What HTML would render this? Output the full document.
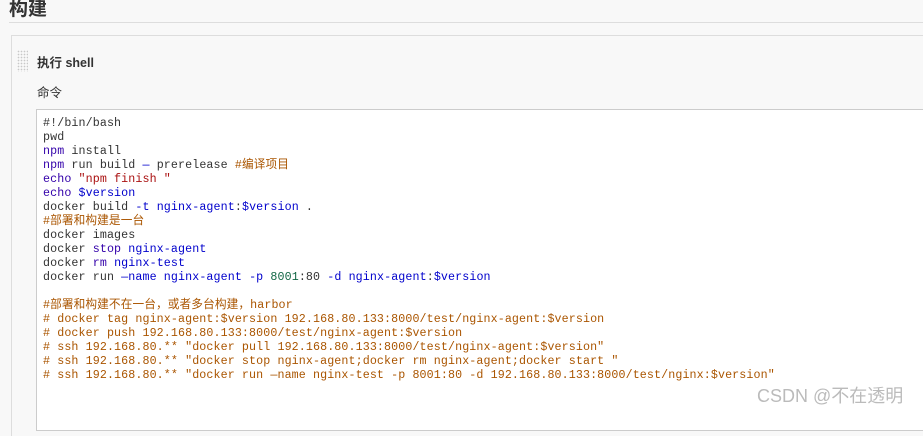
<!DOCTYPE html>
<html><head><meta charset="utf-8"><style>
html,body{margin:0;padding:0;width:923px;height:414px;overflow:hidden;background:#f8f8f8;font-family:"Liberation Sans","Noto Sans CJK SC",sans-serif;}
.h{position:absolute;left:9px;top:-6px;font-size:19px;font-weight:bold;color:#333;}
.hl{position:absolute;left:9px;top:22px;width:914px;height:1px;background:#ddd;}
.panel{position:absolute;left:11px;top:35px;width:930px;height:400px;border-top:1px solid #ddd;border-left:1px solid #ddd;background:#f8f8f8;}
.grip{position:absolute;left:17px;top:50px;width:11px;height:22px;background-image:radial-gradient(#c8c8c8 0.7px,transparent 0.9px);background-size:3px 3px;}
.t1{position:absolute;left:37px;top:52px;font-size:12.5px;font-weight:bold;color:#333;}
.t2{position:absolute;left:37px;top:82px;font-size:12.5px;color:#333;}
.ta{position:absolute;left:36px;top:109px;width:900px;height:320px;background:#fff;border:1px solid #ccc;}
.code{position:absolute;left:43px;top:116px;font-family:"Liberation Mono","Noto Sans CJK SC",monospace;font-size:11.67px;letter-spacing:0.11px;line-height:14px;color:#333;white-space:pre;}
.b{color:#0000cc}.p{color:#3300aa}.r{color:#aa1111}.o{color:#aa5500}.g{color:#116644}
.wm{position:absolute;left:757px;top:382px;font-size:18px;color:#bbb;}
</style></head><body>
<div class="h">构建</div>
<div class="hl"></div>
<div class="panel"></div>
<div class="grip"></div>
<div class="t1">执行 shell</div>
<div class="t2">命令</div>
<div class="ta"></div>
<div class="code">#!/bin/bash
pwd
<span class="p">npm</span> install
<span class="p">npm</span> run build <span class="b">—</span> prerelease <span class="o">#编译项目</span>
<span class="p">echo</span> <span class="r">″npm finish ″</span>
<span class="p">echo</span> <span class="b">$version</span>
docker build <span class="b">-t</span> <span class="b">nginx-agent</span>:<span class="b">$version</span> .
<span class="o">#部署和构建是一台</span>
docker images
docker <span class="p">stop</span> <span class="b">nginx-agent</span>
docker <span class="p">rm</span> <span class="b">nginx-test</span>
docker run <span class="b">—name</span> <span class="b">nginx-agent</span> <span class="b">-p</span> <span class="g">8001</span>:80 <span class="b">-d</span> <span class="b">nginx-agent</span>:<span class="b">$version</span>

<span class="o">#部署和构建不在一台，或者多台构建，harbor
# docker tag nginx-agent:$version 192.168.80.133:8000/test/nginx-agent:$version
# docker push 192.168.80.133:8000/test/nginx-agent:$version
# ssh 192.168.80.** ″docker pull 192.168.80.133:8000/test/nginx-agent:$version″
# ssh 192.168.80.** ″docker stop nginx-agent;docker rm nginx-agent;docker start ″
# ssh 192.168.80.** ″docker run —name nginx-test -p 8001:80 -d 192.168.80.133:8000/test/nginx:$version″</span></div>
<div class="wm">CSDN @不在透明</div>
</body></html>
